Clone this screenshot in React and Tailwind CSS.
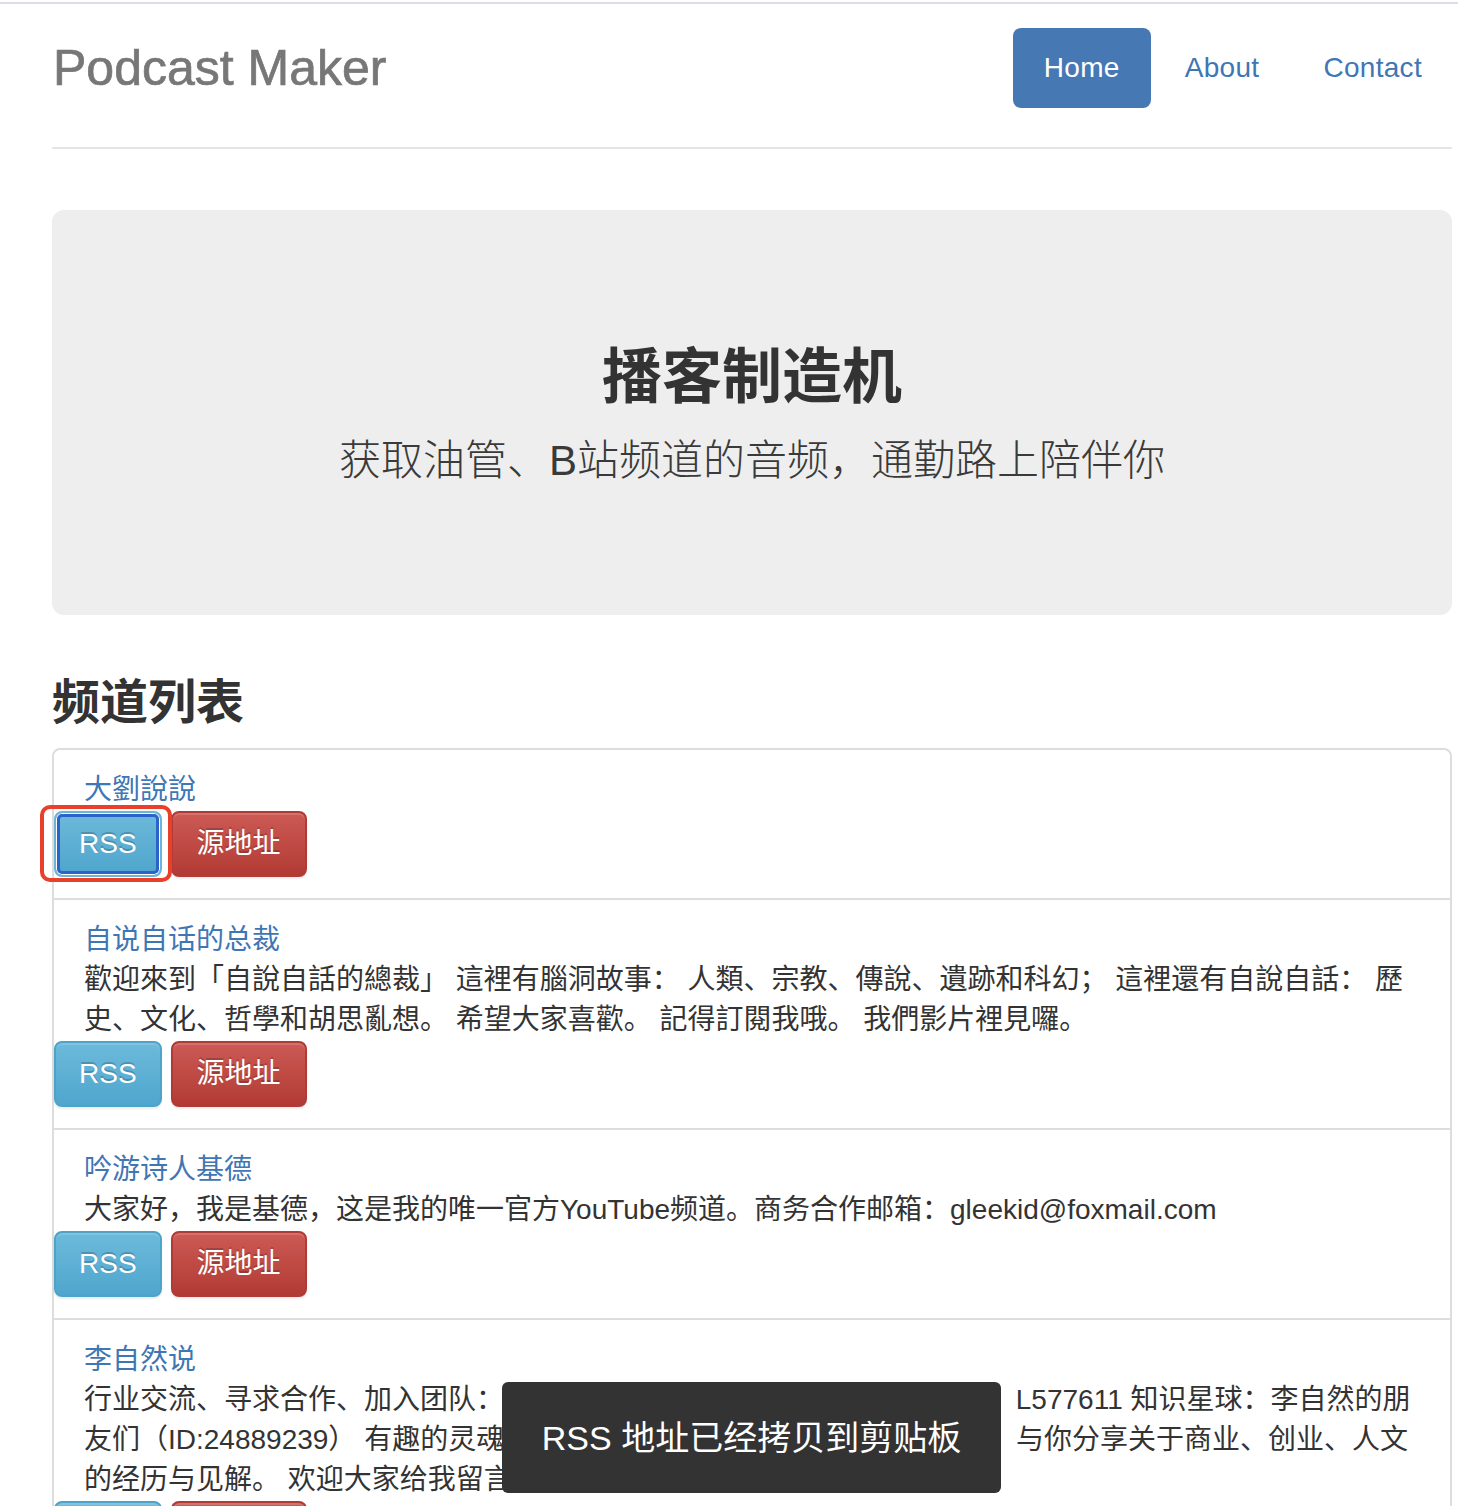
import React from "react";

const channels = [
  { name: "大劉說說", desc: null, focus: true },
  {
    name: "自说自话的总裁",
    desc: "歡迎來到「自說自話的總裁」 這裡有腦洞故事： 人類、宗教、傳說、遺跡和科幻； 這裡還有自說自話： 歷史、文化、哲學和胡思亂想。 希望大家喜歡。 記得訂閱我哦。 我們影片裡見囉。",
  },
  {
    name: "吟游诗人基德",
    desc: "大家好，我是基德，这是我的唯一官方YouTube频道。商务合作邮箱：gleekid@foxmail.com",
  },
  {
    name: "李自然说",
    desc: "行业交流、寻求合作、加入团队：请添加小助手微信，备注来意，微信号： L577611 知识星球：李自然的朋友们（ID:24889239） 有趣的灵魂终将相遇，在这里我会通过视频的方式， 与你分享关于商业、创业、人文的经历与见解。 欢迎大家给我留言，说说你想听的话题。",
  },
];

function RssButton({ focus }) {
  if (focus) {
    return (
      <span className="relative inline-block">
        <button className="h-[66px] px-[23px] rounded-[8px] border-2 border-[#6bb6d6] bg-gradient-to-b from-[#6cb9da] to-[#4ea5cd] text-white text-[28px] leading-[40px] [text-shadow:0_-2px_0_rgba(0,0,0,0.2)] shadow-[inset_0_0_0_1px_#ffffff,inset_0_0_0_4px_#2b63c8]">
          RSS
        </button>
        <span className="pointer-events-none absolute -left-[14px] -top-[6px] w-[132px] h-[77px] border-4 border-[#e8402b] rounded-[10px]"></span>
      </span>
    );
  }
  return (
    <button className="h-[66px] px-[23px] rounded-[8px] border-2 border-[#4ea3c9] bg-gradient-to-b from-[#6cbadb] to-[#4fa6cd] text-white text-[28px] leading-[40px] [text-shadow:0_-2px_0_rgba(0,0,0,0.2)] shadow-[inset_0_2px_0_rgba(255,255,255,0.15),0_2px_2px_rgba(0,0,0,0.075)]">
      RSS
    </button>
  );
}

function SourceButton() {
  return (
    <button className="h-[66px] px-[24px] rounded-[8px] border-2 border-[#b03a35] bg-gradient-to-b from-[#cd5a55] to-[#b23a34] text-white text-[28px] leading-[40px] [text-shadow:0_-2px_0_rgba(0,0,0,0.2)] shadow-[inset_0_2px_0_rgba(255,255,255,0.15),0_2px_2px_rgba(0,0,0,0.075)]">
      源地址
    </button>
  );
}

export default function App() {
  return (
    <div className="relative w-[1458px] h-[1506px] overflow-hidden bg-white text-[#333] font-['Liberation_Sans','Noto_Sans_CJK_SC',sans-serif]">
      <div className="mt-[2px] h-[2px] bg-[#dddde3]"></div>

      <div className="ml-[52px] w-[1400px]">
        {/* Header */}
        <header className="pt-[24px] pb-[39px] border-b-2 border-[#e5e5e5] flex items-center justify-between">
          <h3 className="pl-[1px] text-[50px] leading-[56px] font-medium text-[#777] [-webkit-text-stroke:0.7px_#777]">
            Podcast Maker
          </h3>
          <nav className="flex gap-[4px] text-[28px] leading-[40px] tracking-[0.3px]">
            <a className="px-[31px] py-[20px] rounded-[8px] bg-[#4679b3] text-white">Home</a>
            <a className="px-[30px] py-[20px] rounded-[8px] text-[#3f76b4]">About</a>
            <a className="px-[30px] py-[20px] rounded-[8px] text-[#3f76b4]">Contact</a>
          </nav>
        </header>

        {/* Jumbotron */}
        <section className="mt-[61px] h-[405px] rounded-[12px] bg-[#eeeeee] pt-[135px] flex flex-col items-center">
          <h1 className="text-[60px] leading-[66px] font-bold text-[#333]">播客制造机</h1>
          <p className="mt-[20px] text-[42px] leading-[60px] font-extralight text-[#3a3a3a]">
            获取油管、B站频道的音频，通勤路上陪伴你
          </p>
        </section>

        {/* Channel list */}
        <h3 className="mt-[61px] mb-[19px] text-[48px] leading-[53px] font-bold text-[#333]">频道列表</h3>

        <div className="rounded-[8px] border-2 border-[#dddddd] divide-y-2 divide-[#dddddd]">
          {channels.map((c) => (
            <div key={c.name} className="pt-[20px] pb-[21px] pl-[30px] pr-[29px]">
              <a className="block text-[28px] leading-[40px] text-[#3f76b4]">{c.name}</a>
              {c.desc && <p className="text-[28px] leading-[40px] text-[#333]">{c.desc}</p>}
              <div className="mt-[1px] -ml-[30px] flex gap-[9px]">
                <RssButton focus={c.focus} />
                <SourceButton />
              </div>
            </div>
          ))}
        </div>
      </div>

      {/* Toast */}
      <div className="absolute left-[502px] top-[1382px] w-[499px] h-[111px] rounded-[6px] bg-[#333333] flex items-center justify-center text-white text-[34px] leading-[44px]">
        RSS 地址已经拷贝到剪贴板
      </div>
    </div>
  );
}
